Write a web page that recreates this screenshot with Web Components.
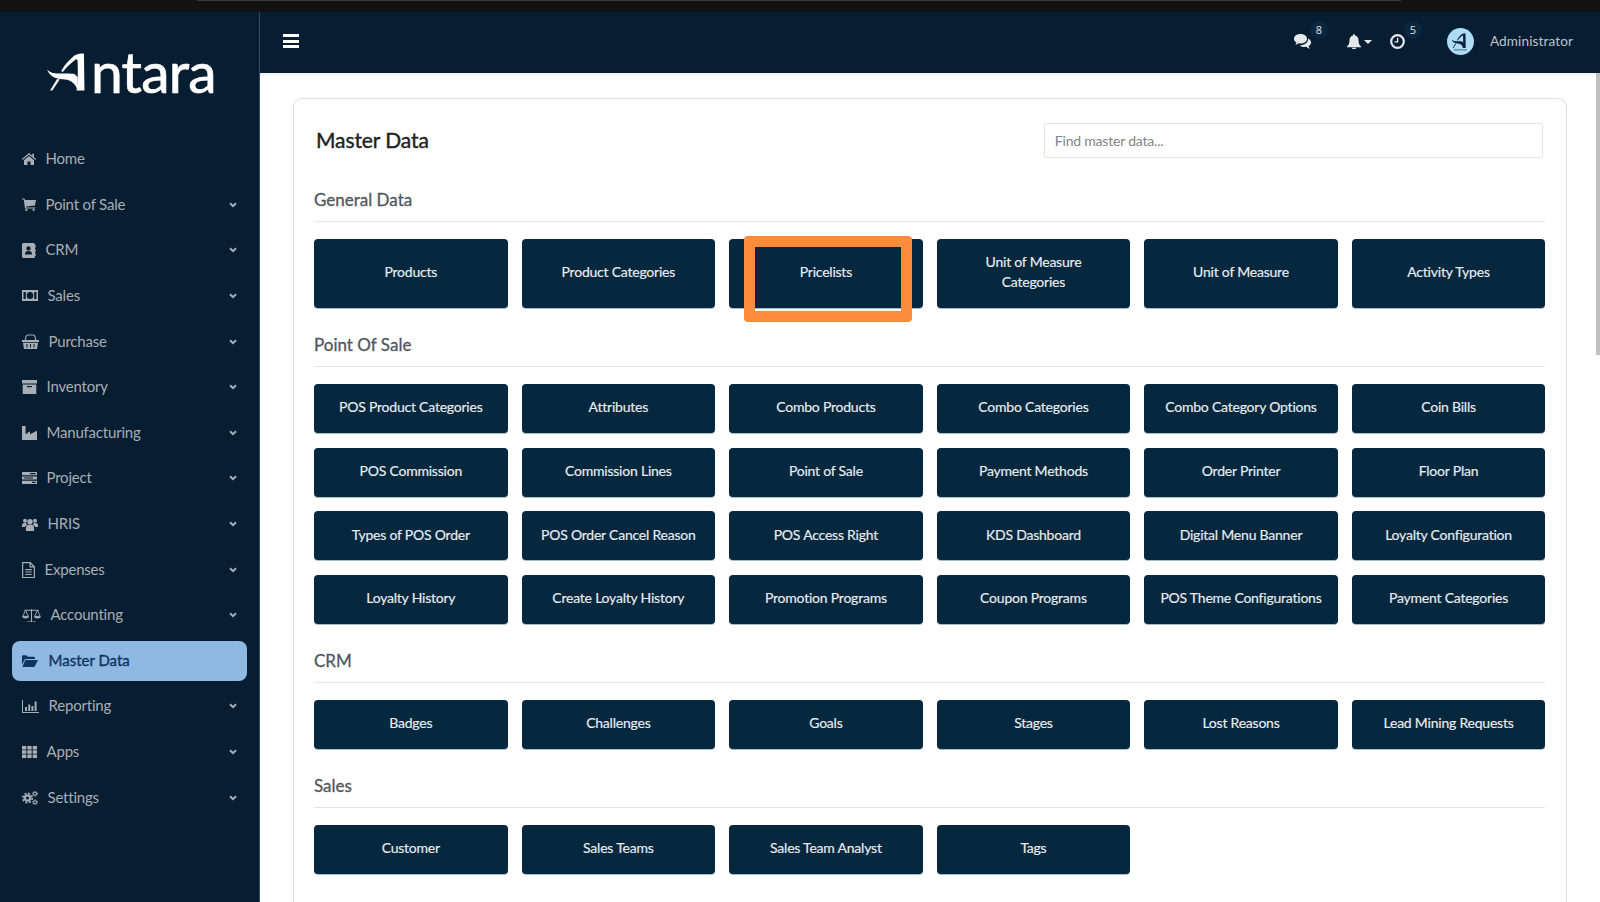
<!DOCTYPE html>
<html lang="en"><head><meta charset="utf-8"><title>Master Data</title>
<style>
html,body{margin:0;height:100%;overflow:hidden;background:#fff;font-family:Lato,"Liberation Sans",sans-serif}
</style></head><body>
<app-shell>
  <app-sidebar slot="side">
    <side-item icon="home" w="14">Home</side-item>
    <side-item icon="cart" w="14" more>Point of Sale</side-item>
    <side-item icon="crm" w="14" more>CRM</side-item>
    <side-item icon="money" w="16" more>Sales</side-item>
    <side-item icon="basket" w="17" more>Purchase</side-item>
    <side-item icon="archive" w="15" more>Inventory</side-item>
    <side-item icon="industry" w="15" more>Manufacturing</side-item>
    <side-item icon="tasks" w="15" more>Project</side-item>
    <side-item icon="users" w="16" more>HRIS</side-item>
    <side-item icon="file" w="13" more>Expenses</side-item>
    <side-item icon="scale" w="19" more>Accounting</side-item>
    <side-item icon="folder" w="16" active>Master Data</side-item>
    <side-item icon="chart" w="17" more>Reporting</side-item>
    <side-item icon="grid" w="15" more>Apps</side-item>
    <side-item icon="cogs" w="16" more>Settings</side-item>
  </app-sidebar>
  <top-bar slot="top"></top-bar>
  <master-card slot="main">
    <data-section heading="General Data" tall>
      <data-btn>Products</data-btn><data-btn>Product Categories</data-btn><data-btn mark>Pricelists</data-btn><data-btn>Unit of Measure<br>Categories</data-btn><data-btn>Unit of Measure</data-btn><data-btn>Activity Types</data-btn>
    </data-section>
    <data-section heading="Point Of Sale">
      <data-btn>POS Product Categories</data-btn><data-btn>Attributes</data-btn><data-btn>Combo Products</data-btn><data-btn>Combo Categories</data-btn><data-btn>Combo Category Options</data-btn><data-btn>Coin Bills</data-btn>
      <data-btn>POS Commission</data-btn><data-btn>Commission Lines</data-btn><data-btn>Point of Sale</data-btn><data-btn>Payment Methods</data-btn><data-btn>Order Printer</data-btn><data-btn>Floor Plan</data-btn>
      <data-btn>Types of POS Order</data-btn><data-btn>POS Order Cancel Reason</data-btn><data-btn>POS Access Right</data-btn><data-btn>KDS Dashboard</data-btn><data-btn>Digital Menu Banner</data-btn><data-btn>Loyalty Configuration</data-btn>
      <data-btn>Loyalty History</data-btn><data-btn>Create Loyalty History</data-btn><data-btn>Promotion Programs</data-btn><data-btn>Coupon Programs</data-btn><data-btn>POS Theme Configurations</data-btn><data-btn>Payment Categories</data-btn>
    </data-section>
    <data-section heading="CRM">
      <data-btn>Badges</data-btn><data-btn>Challenges</data-btn><data-btn>Goals</data-btn><data-btn>Stages</data-btn><data-btn>Lost Reasons</data-btn><data-btn>Lead Mining Requests</data-btn>
    </data-section>
    <data-section heading="Sales">
      <data-btn>Customer</data-btn><data-btn>Sales Teams</data-btn><data-btn>Sales Team Analyst</data-btn><data-btn>Tags</data-btn>
    </data-section>
  </master-card>
</app-shell>
<script>
const BG='#071d31';
const LOGO_A='<path d="M35 .5 35.500 37.500H28C29 30 29.500 22 29 9 29 6 28 5.500 26 7.500 21 11.500 18 15 15 19L13.500 18C17 11 22 6 26 2.500 29 .8 32 .5 35 .5z"/><path d="M0 16.500C3 19.500 6 20.500 11 20.500 17 20.500 23 20 26 21L29 24V37C27 31 23 27 17 26.500 11 26 3.500 25.500 0 16.500z"/><path d="M9.500 26 12 26.500 5 37.500H3z"/>';
const ICONS={
home:['0 0 14 12','<path d="M7 0 14 6l-.7.9L7 1.700.7 6.900 0 6z"/><path d="M2 7.200 7 3l5 4.200V12H8.500V8.500h-3V12H2z"/><path d="M10.200.8H12v3.400l-1.800-1.500z"/>'],
cart:['0 0 14 13','<path d="M0 .4h2.600L3 2h11l-1 5.600-9 1 .2 1h9.100v1H3L1.800 1.600H0z"/><circle cx="4.400" cy="11.900" r="1.100"/><circle cx="11.600" cy="11.900" r="1.100"/>'],
crm:['0 0 14 15','<path fill-rule="evenodd" d="M1.500 0h10A1.500 1.500 0 0 1 13 1.500v12a1.500 1.500 0 0 1-1.500 1.500h-10A1.500 1.500 0 0 1 0 13.500v-12A1.500 1.500 0 0 1 1.500 0zM6.500 3.200a2.200 2.200 0 1 0 0 4.400 2.200 2.200 0 0 0 0-4.400zM3 11.500h7c0-2.500-1-3.400-3.500-3.400S3 9 3 11.500z"/><path d="M13.300 2h.7v2.500h-.7zM13.300 6.200h.7v2.500h-.7zM13.300 10.400h.7v2.500h-.7z"/>'],
money:['0 0 16 11','<path fill-rule="evenodd" d="M0 0h16v11H0zM1.500 2v7h2.300V2zM12.200 2v7h2.300V2zM8 2a3.300 3.500 0 1 0 0 7 3.300 3.500 0 0 0 0-7z"/><path d="M7.300 3.600h1.300v4H7.300z" fill="'+BG+'"/>'],
basket:['0 0 17 15','<path d="M3.200 6.500 4 2.500Q4.300 1 6 1h5q1.700 0 2 1.500l.8 4" fill="none" stroke="currentColor" stroke-width="1.200"/><path d="M0 6h17v2H0z"/><path fill-rule="evenodd" d="M1 8.700h15L15 15H2zM4.500 10v3.500h1V10zM8 10v3.500h1V10zM11.500 10v3.500h1V10z"/>'],
archive:['0 0 15 14','<path d="M0 0h15v3.500H0z"/><path fill-rule="evenodd" d="M.7 4.500h13.600V14H.7zM5 6v1.300h5V6z"/>'],
industry:['0 0 15 14','<path d="M0 0h3.600v8.300L8 5.300v3L15 4.800V14H0z"/>'],
tasks:['0 0 15 12','<path fill-rule="evenodd" d="M0 0h15v3.200H0zM8 1v1.200h5.500V1zM0 4.400h15v3.200H0zM2 5.400v1.200h9V5.400zM0 8.800h15V12H0zM10 9.800V11h3.500V9.800z"/>'],
users:['0 0 16 13','<circle cx="8" cy="3.800" r="2.700"/><path d="M3.900 13V10c0-2.500 1.500-3.600 4.100-3.600s4.100 1.100 4.100 3.600v3z"/><circle cx="3" cy="2.800" r="2"/><circle cx="13" cy="2.800" r="2"/><path d="M0 9V7c0-1.400 1-2.100 2.900-2.100l1.300.2c.2 1 .6 1.500 1 1.900C3.700 7.500 3 8.300 2.900 9zM16 9V7c0-1.400-1-2.100-2.900-2.100l-1.300.2c-.2 1-.6 1.500-1 1.900 1.500.5 2.200 1.300 2.300 2z"/>'],
file:['0 0 12 15','<path d="M.6.6h7l3.800 3.800v10H.6zM7.500.8v3.700h3.700" fill="none" stroke="currentColor" stroke-width="1.100"/><path d="M3 6.500h6v1H3zM3 8.800h6v1H3zM3 11.100h6v1H3z"/>'],
scale:['0 0 17 13','<path d="M8 .8h1V12H8zM4.500 12h8v1h-8zM2 1.600h13v.9H2z"/><path d="M3.200 2.200.7 7.500h5zM13.800 2.200 11.300 7.500h5z" fill="none" stroke="currentColor" stroke-width=".8"/><path d="M.2 7.500h6c0 1.300-1.300 2-3 2s-3-.7-3-2zM10.800 7.500h6c0 1.300-1.300 2-3 2s-3-.7-3-2z"/>'],
folder:['0 0 16 12','<path d="M0 9.700V1.200Q0 .2 1 .2h3.300L5.800 1.800H11.800Q13 1.800 13 3v1H4Q2.900 4 2.400 5z"/><path d="M3.300 5H16l-3.300 6.500Q12.400 12 11.800 12H.4z"/>'],
chart:['0 0 17 13','<path d="M0 0h1v12h16v1H0z"/><path d="M3 7h2v4H3zM6.200 4.500h2V11h-2zM9.400 6h2v5h-2zM12.600 1.500h2V11h-2z"/>'],
grid:['0 0 15 12','<path d="M0 0h4.300v3.500H0zM5.300 0h4.400v3.500H5.300zM10.700 0H15v3.500h-4.300zM0 4.300h4.300v3.400H0zM5.300 4.300h4.400v3.400H5.300zM10.700 4.300H15v3.400h-4.300zM0 8.500h4.300V12H0zM5.300 8.500h4.400V12H5.300zM10.700 8.500H15V12h-4.300z"/>'],
cogs:['0 0 16 14','<g fill="none" stroke="currentColor"><circle cx="5.500" cy="7" r="2.700" stroke-width="2.200"/><circle cx="5.500" cy="7" r="4.700" stroke-width="1.700" stroke-dasharray="2 1.700"/><circle cx="13" cy="2.700" r="1.500" stroke-width="1.100"/><circle cx="13" cy="2.700" r="2.500" stroke-width="1" stroke-dasharray="1 1"/><circle cx="13" cy="11.300" r="1.500" stroke-width="1.100"/><circle cx="13" cy="11.300" r="2.500" stroke-width="1" stroke-dasharray="1 1"/></g>'],
chat:['0 0 17 15','<path d="M6.500 0C10 0 13 2 13 4.700s-3 4.800-6.500 4.800l-1.800-.2C3.700 10 2.500 10.700 1.300 11c.6-.8 1-1.600 1.100-2.500C.9 7.600 0 6.300 0 4.700 0 2 3 0 6.500 0z"/><path d="M14 4.600c1.800.8 3 2.200 3 3.900 0 1.500-.8 2.700-2.300 3.600.1.900.5 1.900 1.200 2.800-1.400-.3-2.700-1-3.700-2.100l-1.600.2c-1.900 0-3.600-.6-4.700-1.600 4.500 0 8.500-2.500 8.100-6.800z"/>'],
bell:['0 0 14 15','<path d="M7 0c.5 0 .9.400.9.900v.5C10.300 1.900 11.500 3.700 11.500 6c0 3.500.8 5 2.500 6.500v.7H0v-.7C1.700 11 2.500 9.500 2.500 6c0-2.300 1.200-4.100 3.600-4.600V.9c0-.5.400-.9.900-.9z"/><path d="M5 13.700h4a2 2 0 0 1-4 0z"/>'],
clock:['0 0 15 15','<circle cx="7.500" cy="7.500" r="6.300" fill="none" stroke="currentColor" stroke-width="2.200"/><path d="M7 3.800h1.300v4.700H4.500V7.300H7z"/>']
};
const def=(n,c)=>customElements.define(n,c);
class Base extends HTMLElement{
  render(html){ if(!this.shadowRoot) this.attachShadow({mode:'open'}); this.shadowRoot.innerHTML=html; }
}
const svg=(name,w,cls='')=>{const [vb,b]=ICONS[name];const [,,vw,vh]=vb.split(' ').map(Number);return `<svg class="${cls}" viewBox="${vb}" width="${w}" height="${w*vh/vw}" fill="currentColor" aria-hidden="true">${b}</svg>`};

def('app-shell',class extends Base{connectedCallback(){this.render(`<style>
:host{display:flex;flex-direction:column;width:1600px;height:902px;overflow:hidden}
.strip{height:12px;flex:none;background:#121212;display:flex;justify-content:center}
.strip i{display:block;width:1204px;height:1px;margin-left:-2px;background:#3a3a3a}
.row{flex:1;display:flex;min-height:0}
.main{flex:1;display:flex;flex-direction:column;min-width:0}
.body{flex:1;display:flex;min-height:0;overflow:hidden;background:#fff;box-shadow:inset 0 4px 4px -3px #e6ebee}
.scroll{flex:1;min-width:0;padding:25px 29px 0 33px;overflow:hidden}
.track{flex:none;width:4px;background:#fff}
.thumb{height:282px;background:#c1c1c1}
</style><div class="strip"><i></i></div><div class="row"><slot name="side"></slot><div class="main"><slot name="top"></slot><div class="body"><div class="scroll"><slot name="main"></slot></div><div class="track"><div class="thumb"></div></div></div></div></div>`)}});

def('app-logo',class extends Base{connectedCallback(){this.render(`<style>
:host{display:flex;align-items:flex-end;height:38px;color:#fff}
svg{display:block;flex:none}
span{font:400 57px/38px Lato,sans-serif;letter-spacing:-.8px;margin-left:6px;white-space:nowrap;height:38px;display:block;transform:translateY(-1.500px);-webkit-text-stroke:.7px #fff}
</style><svg width="38" height="38" viewBox="0 0 36 38" preserveAspectRatio="none" fill="#fff">${LOGO_A}</svg><span>ntara</span>`)}});

def('app-sidebar',class extends Base{connectedCallback(){this.render(`<style>
:host{display:flex;flex-direction:column;flex:none;width:259px;background:${BG};border-right:1px solid #3a4a58;box-sizing:content-box}
.logo{height:126.800px;flex:none;box-sizing:border-box;padding:41px 0 0 47px}
nav{display:flex;flex-direction:column;gap:4.930px;padding:0 12px}
</style><div class="logo"><app-logo></app-logo></div><nav><slot></slot></nav>`)}});

def('side-item',class extends Base{connectedCallback(){
const a=this.hasAttribute('active');const w=+this.getAttribute('w');
this.render(`<style>
:host{display:flex;align-items:center;height:40.700px;padding:0 10px;box-sizing:border-box;border-radius:8px;
 color:${a?'#0f335f':'#a8aeb5'};background:${a?'#8fb9e2':'transparent'};font:400 15px Lato,sans-serif;letter-spacing:${a?'0':'-.2px'};white-space:nowrap}
svg.i{flex:none;margin-right:${a?'10.500px':'9.500px'}}
.t{flex:1;transform:translateY(-1.500px);${a?'-webkit-text-stroke:.35px #0f335f;':''}}
svg.c{flex:none;width:8px;height:6px}
</style>${svg(this.getAttribute('icon'),w,'i')}<span class="t"><slot></slot></span>${this.hasAttribute('more')?'<svg class="c" viewBox="0 0 8 6"><path d="M1 1.200 4 4.200 7 1.200" fill="none" stroke="currentColor" stroke-width="2"/></svg>':''}`)}});

def('top-badge',class extends Base{connectedCallback(){this.render(`<style>
:host{position:absolute;left:var(--x);top:-13px;width:18px;height:18px;border-radius:50%;background:#0b2740;color:#dfe4e8;font:500 11px/18px "Open Sans",sans-serif;text-align:center}
</style><slot></slot>`)}});

def('top-bar',class extends Base{connectedCallback(){this.render(`<style>
:host{display:flex;align-items:center;flex:none;height:61px;background:${BG};padding:0 27px 3px 23px;box-sizing:border-box;color:#e6e9ec}
.burger{width:16px;height:14px;display:flex;flex-direction:column;justify-content:space-between;flex:none}
.burger i{display:block;height:3px;background:#fff}
.g{margin-left:auto;display:flex;align-items:center;position:relative}
.wrap{position:relative;display:flex;top:.5px}
.car{width:0;height:0;border:4px solid transparent;border-top-color:#e6e9ec;border-bottom:0;margin-left:3px}
svg{display:block;flex:none}
.name{font:400 13.600px Lato,sans-serif;letter-spacing:.1px;color:#bcc3c9;margin-left:16px;white-space:nowrap}
</style><div class="burger"><i></i><i></i><i></i></div>
<div class="g">
 <div class="wrap">${svg('chat',17)}<top-badge style="--x:16px">8</top-badge></div>
 <div class="wrap" style="margin-left:36px;align-items:center">${svg('bell',14)}<span class="car"></span></div>
 <div class="wrap" style="margin-left:18px">${svg('clock',15)}<top-badge style="--x:14px">5</top-badge></div>
 <svg style="margin-left:42px" width="27" height="27" viewBox="0 0 27 27"><circle cx="13.500" cy="13.500" r="13.500" fill="#aedbf6"/><g transform="translate(4.500 5) scale(.4)" fill="#0b2238">${LOGO_A}</g><path d="M7 21.500h13v.8H7z" fill="#33506a"/></svg>
 <span class="name">Administrator</span>
</div>`)}});

def('master-card',class extends Base{connectedCallback(){this.render(`<style>
:host{display:block;border:1px solid #dcdfe2;border-bottom:0;border-radius:9px 9px 0 0;padding:24px 20.700px 0 20px;height:900px;box-sizing:border-box;background:#fff}
.head{display:flex;align-items:center;justify-content:space-between;height:35px;margin-bottom:30px;padding-left:2px;padding-right:2.500px}
h1{margin:0;font:400 21px Lato,sans-serif;letter-spacing:-.1px;color:#222;white-space:nowrap;transform:translateY(-1.500px);-webkit-text-stroke:.4px #222}
input{width:499px;height:35px;box-sizing:border-box;border:1px solid #e2e4e6;border-radius:2px;padding:0 10px;font:400 14px Lato,sans-serif;letter-spacing:-.2px;outline:0;color:#333;background:#fff}
input::placeholder{color:#7f858a;opacity:1}
</style><div class="head"><h1>Master Data</h1><input placeholder="Find master data..."></div><slot></slot>`)}});

def('data-section',class extends Base{connectedCallback(){this.render(`<style>
:host{display:block;margin-bottom:25px}
h2{margin:0 0 17px;font:400 17px/24px Lato,sans-serif;color:#52575c;padding-bottom:9px;border-bottom:1px solid #e4e6e8;-webkit-text-stroke:.3px #52575c}
.g{display:grid;grid-template-columns:repeat(6,1fr);column-gap:14px;row-gap:14.800px;--h:${this.hasAttribute('tall')?'68.800px':'49px'}}
</style><h2>${this.getAttribute('heading')}</h2><div class="g"><slot></slot></div>`)}});

def('data-btn',class extends Base{connectedCallback(){this.render(`<style>
:host{display:flex;align-items:center;justify-content:center;position:relative;height:var(--h);background:#06283f;color:#e9eef2;border-radius:4px;font:400 14px/20.500px Lato,sans-serif;letter-spacing:-.22px;text-align:center;cursor:pointer;box-shadow:0 1px 0 #a9bcc9}
span{transform:translateY(-1px);-webkit-text-stroke:.15px #e9eef2}
.mark{position:absolute;left:15px;top:-3px;width:168px;height:86px;box-sizing:border-box;border:11px solid #ff8c3a;border-radius:4px;pointer-events:none}
</style><span><slot></slot></span>${this.hasAttribute('mark')?'<div class="mark"></div>':''}`)}});
</script>
</body></html>
